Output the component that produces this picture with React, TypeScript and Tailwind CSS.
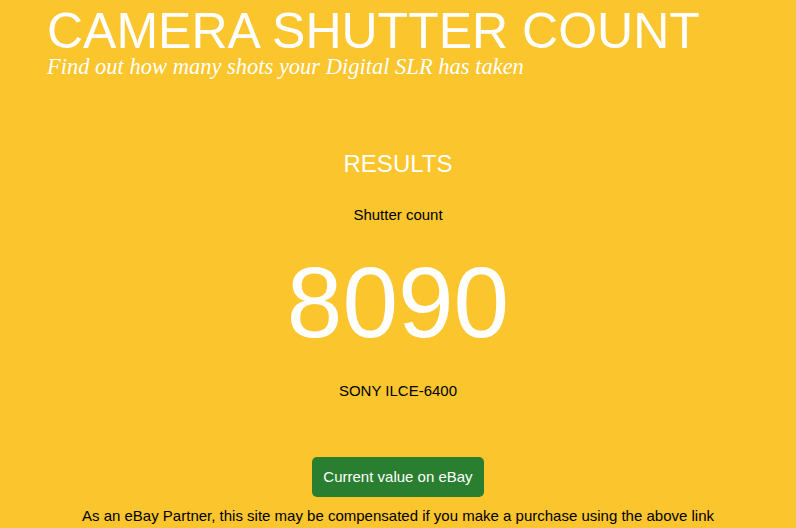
export default function App() {
  return (
    <div className="min-h-screen bg-[#fbc52e] font-['Liberation_Sans',Arial,sans-serif]">
      {/* Header */}
      <header className="pl-[47px] pt-[8px]">
        <h1 className="text-[50px] leading-[47px] font-normal text-white">CAMERA SHUTTER COUNT</h1>
        <p className="mt-[3px] font-['Liberation_Serif',Georgia,serif] text-[22.5px] italic leading-[18px] text-white">
          Find out how many shots your Digital SLR has taken
        </p>
      </header>

      {/* Results */}
      <main className="flex flex-col items-center text-center">
        <h2 className="mt-[76px] text-[24px] leading-[24px] text-white">RESULTS</h2>
        <p className="mt-[31px] text-[15px] leading-[15px] text-black">Shutter count</p>
        <div className="mt-[30px] text-[100px] leading-[100px] text-white">8090</div>
        <p className="mt-[31px] text-[15px] leading-[15px] text-black">SONY ILCE-6400</p>
        <a
          href="#"
          className="mt-[59px] flex h-10 items-center rounded-[5px] bg-[#2a7e2f] px-[11px] text-[15px] text-white"
        >
          Current value on eBay
        </a>
        <p className="mt-[11px] text-[15px] leading-[15px] text-black">
          As an eBay Partner, this site may be compensated if you make a purchase using the above link
        </p>
      </main>
    </div>
  )
}
